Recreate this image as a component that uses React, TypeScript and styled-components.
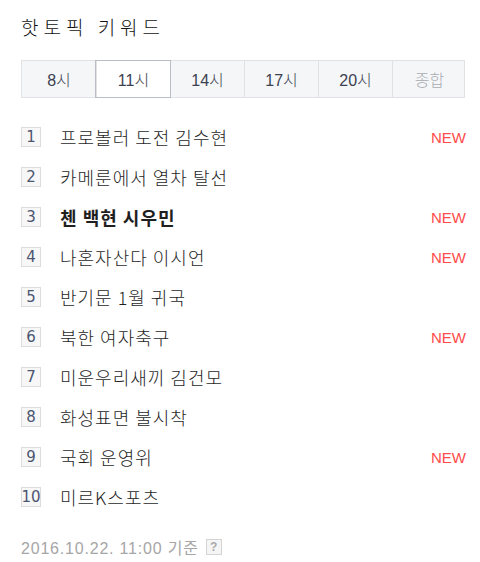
import React from "react";
import styled, { createGlobalStyle } from "styled-components";

const Global = createGlobalStyle`
  html, body { margin: 0; padding: 0; background: #fff; }
  body { font-family: "Noto Sans CJK KR", "Noto Sans", sans-serif; }
`;

const Wrap = styled.div`
  width: 480px;
  height: 562px;
  box-sizing: border-box;
  padding: 14px 14px 0 21px;
`;

const Title = styled.h2`
  margin: 0;
  font-size: 19px;
  font-weight: 300;
  letter-spacing: 5px;
  color: #111;
  line-height: 26px;
`;

const Tabs = styled.div`
  display: grid;
  grid-template-columns: repeat(6, 74px);
  margin-top: 20px;
  width: 444px;
  background: #f5f6f8;
  border: 1px solid #e0e2e6;
  box-sizing: border-box;
  height: 38px;
`;

const Tab = styled.div<{ $active?: boolean; $muted?: boolean }>`
  display: flex;
  align-items: center;
  justify-content: center;
  font-family: "Liberation Sans", "Noto Sans CJK KR", sans-serif;
  font-size: 16px;
  font-weight: 300;
  color: ${(p) => (p.$muted ? "#a8abb2" : "#3c4150")};
  border-left: 1px solid #e0e2e6;
  &:first-child { border-left: none; }
  ${(p) =>
    p.$active
      ? `background:#fff; outline:1px solid #b9bdc5; position:relative; z-index:1;`
      : ""}
`;

const List = styled.ol`
  list-style: none;
  margin: 19px 0 0;
  padding: 0;
`;

const Row = styled.li`
  display: flex;
  align-items: center;
  height: 40px;
`;

const Num = styled.span`
  width: 20px;
  height: 20px;
  box-sizing: border-box;
  border: 1px solid #dcdcdc;
  background: #f7f7f7;
  display: flex;
  align-items: center;
  justify-content: center;
  font-family: "DejaVu Sans", "Liberation Sans", sans-serif;
  font-size: 15px;
  color: #4b5670;
  flex: none;
`;

const Keyword = styled.span<{ $bold?: boolean }>`
  margin-left: 19px;
  font-size: 18px;
  letter-spacing: 1px;
  font-weight: ${(p) => (p.$bold ? 700 : 300)};
  color: #1f1f1f;
  flex: 1;
`;

const New = styled.span`
  font-family: "Liberation Sans", sans-serif;
  font-size: 15px;
  color: #ff4b4b;
  width: 36px;
  text-align: right;
`;

const Footer = styled.div`
  margin-top: 20px;
  height: 20px;
  display: flex;
  align-items: center;
  gap: 6px;
  font-family: "Liberation Sans", "Noto Sans CJK KR", sans-serif;
  font-size: 16px;
  letter-spacing: 0.8px;
  color: #a6a6a6;
`;

const Help = styled.span`
  width: 16px;
  height: 16px;
  box-sizing: border-box;
  border: 1px solid #d4d4d4;
  background: #f5f5f5;
  display: inline-flex;
  align-items: center;
  justify-content: center;
  font-size: 12px;
  font-weight: 700;
  letter-spacing: 0;
  color: #aaa;
  margin-left: 1px;
`;

const tabs = ["8시", "11시", "14시", "17시", "20시", "종합"];
const items: [string, boolean, boolean?][] = [
  ["프로볼러 도전 김수현", true],
  ["카메룬에서 열차 탈선", false],
  ["첸 백현 시우민", true, true],
  ["나혼자산다 이시언", true],
  ["반기문 1월 귀국", false],
  ["북한 여자축구", true],
  ["미운우리새끼 김건모", false],
  ["화성표면 불시착", false],
  ["국회 운영위", true],
  ["미르K스포츠", false],
];

export default function App() {
  return (
    <Wrap>
      <Global />
      <Title>핫토픽 키워드</Title>
      <Tabs>
        {tabs.map((t, i) => (
          <Tab key={t} $active={i === 1} $muted={i === 5}>
            {t}
          </Tab>
        ))}
      </Tabs>
      <List>
        {items.map(([k, n, b], i) => (
          <Row key={k}>
            <Num>{i + 1}</Num>
            <Keyword $bold={b}>{k}</Keyword>
            {n && <New>NEW</New>}
          </Row>
        ))}
      </List>
      <Footer>
        2016.10.22. 11:00 기준 <Help>?</Help>
      </Footer>
    </Wrap>
  );
}
